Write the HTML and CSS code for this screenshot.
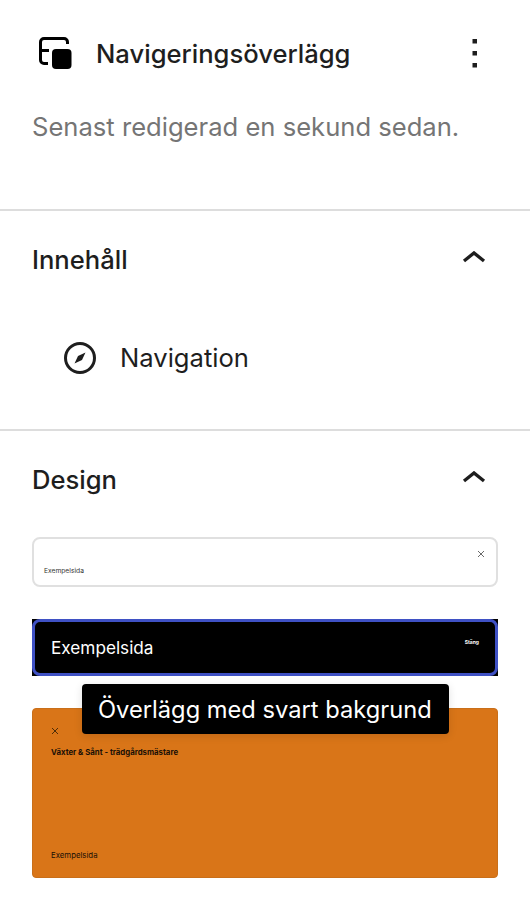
FILE: index.html
```html
<!DOCTYPE html>
<html lang="sv">
<head>
<meta charset="utf-8">
<title>Navigeringsöverlägg</title>
<link rel="stylesheet" href="styles.css">
</head>
<body>
<div class="panel">
  <header class="summary">
    <div class="title-row">
      <svg class="block-icon" width="48" height="48" viewBox="0 0 48 48" aria-hidden="true">
        <path class="outline" d="M35.5 14 V12 A3.5 3.5 0 0 0 32 8.5 H12 A3.5 3.5 0 0 0 8.5 12 V30 A3.5 3.5 0 0 0 12 33.5 H16 M8.5 20.5 H17"/>
        <rect x="20" y="19" width="19.5" height="20" rx="4"/>
      </svg>
      <h1 class="title">Navigeringsöverlägg</h1>
      <svg class="more" width="8" height="32" viewBox="0 0 8 32" aria-hidden="true">
        <rect x="2.5" y="1" width="4.5" height="4.5"/><rect x="2.5" y="13" width="4.5" height="4.5"/><rect x="2.5" y="25" width="4.5" height="4.5"/>
      </svg>
    </div>
    <p class="edited">Senast redigerad en sekund sedan.</p>
  </header>

  <section class="section content">
    <div class="section-head">
      <h2>Innehåll</h2>
      <svg class="chevron" width="24" height="12" viewBox="0 0 24 12" aria-hidden="true"><path d="M2 10 L12 2 L22 10"/></svg>
    </div>
    <div class="nav-item">
      <svg class="compass" width="34" height="34" viewBox="0 0 34 34" aria-hidden="true">
        <circle cx="17" cy="17" r="14.5"/>
        <path class="needle" d="M22.5 11.5 L19 19 L11.5 22.5 L15 15 Z"/>
      </svg>
      <span>Navigation</span>
    </div>
  </section>

  <section class="section design">
    <div class="section-head">
      <h2>Design</h2>
      <svg class="chevron" width="24" height="12" viewBox="0 0 24 12" aria-hidden="true"><path d="M2 10 L12 2 L22 10"/></svg>
    </div>
    <div class="styles">
      <div class="card card-light">
        <span class="link-small">Exempelsida</span>
        <svg class="x" width="8" height="8" viewBox="0 0 8 8" aria-hidden="true"><path d="M1 1 L7 7 M7 1 L1 7"/></svg>
      </div>
      <div class="card card-dark">
        <div class="dark-inner">
          <span class="link-large">Exempelsida</span>
          <span class="close-text">Stäng</span>
        </div>
      </div>
      <div class="card card-orange">
        <svg class="x x-dark" width="8" height="8" viewBox="0 0 8 8" aria-hidden="true"><path d="M1 1 L7 7 M7 1 L1 7"/></svg>
        <strong class="site">Växter &amp; Sånt - trädgårdsmästare</strong>
        <span class="link-orange">Exempelsida</span>
      </div>
      <div class="tooltip">Överlägg med svart bakgrund</div>
    </div>
  </section>
</div>
</body>
</html>
```
FILE: styles.css
```css
* { box-sizing: border-box; }
html, body { margin: 0; background: #fff; }
body { font-family: Inter, "Noto Sans", sans-serif; color: #1e1e1e; width: 530px; height: 906px; overflow: hidden; }
.summary { height: 209px; padding: 30px 32px 0; }
.title-row { display: flex; align-items: center; height: 48px; }
.block-icon { flex: none; margin-right: 16px; fill: #000; }
.outline { fill: none; stroke: #000; stroke-width: 3; }
.title { margin: 0; flex: 1; font-size: 25.6px; line-height: 48px; font-weight: 500; }
.more { flex: none; margin-right: 20px; fill: #1e1e1e; }
.edited { margin: 31px 0 0; font-size: 25.6px; line-height: 36px; color: #757575; }
.section { border-top: 2px solid #ddd; padding: 0 32px; }
.content { height: 220px; }
.section-head { display: flex; align-items: center; justify-content: space-between; height: 60px; margin-top: 19px; padding-right: 12px; }
.section-head h2 { margin: 0; font-size: 25.6px; font-weight: 500; line-height: 60px; }
.chevron { fill: none; stroke: #1e1e1e; stroke-width: 3.4; margin-top: -6px; }
.nav-item { display: flex; align-items: center; gap: 23px; margin: 48px 0 0 31px; font-size: 25.6px; line-height: 40px; }
.compass { flex: none; fill: none; stroke: #1e1e1e; stroke-width: 3; }
.needle { fill: #1e1e1e; stroke: none; }
.styles { position: relative; display: flex; flex-direction: column; gap: 32px; margin-top: 27px; }
.card { display: flex; position: relative; width: 466px; }
.card-light { height: 50px; background: #fff; border: 2px solid #e0e0e0; border-radius: 8px; padding: 0 10px; align-items: flex-end; justify-content: space-between; }
.link-small { font-size: 6.7px; line-height: 10px; margin-bottom: 9px; color: #333; }
.card-light .x { margin: 0 1px 27px 0; }
.x { fill: none; stroke: #444; stroke-width: .8; }
.card-dark { height: 57px; background: #000; }
.dark-inner { flex: 1; display: flex; justify-content: space-between; border: 3px solid #3f51c4; border-radius: 8px; padding: 0 16px; color: #fff; }
.link-large { font-size: 17.2px; line-height: 52px; font-weight: 400; }
.close-text { font-size: 5px; font-weight: 700; line-height: 10px; margin-top: 15px; }
.card-orange { height: 170px; background: #d97518; border: 1px solid #c96f1a; border-radius: 4px; padding: 18px 19px 16px 18px; flex-direction: column; color: #1a1006; }
.x-dark { stroke: #2a1a06; margin-bottom: 11px; }
.site { font-size: 7.8px; font-weight: 700; line-height: 12px; }
.link-orange { font-size: 7.8px; line-height: 12px; margin-top: auto; }
.tooltip { position: absolute; left: 50px; top: 147px; height: 50px; width: 367px; padding: 0 16px; background: #000; color: #fff; border-radius: 4px; font-size: 23.7px; line-height: 52px; white-space: nowrap; box-shadow: 0 2px 8px rgba(0,0,0,.12); }
```
